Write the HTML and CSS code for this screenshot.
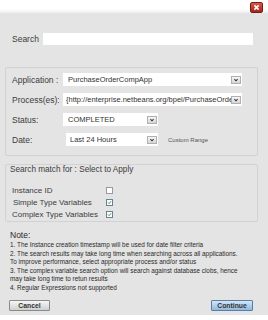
FILE: index.html
```html
<!DOCTYPE html>
<html lang="en">
  <head>
    <meta charset="UTF-8" />
    <meta name="viewport" content="width=device-width, initial-scale=1.0" />
    <title>Search Instances</title>
    <link rel="stylesheet" href="styles.css">
  </head>
  <body>
    <div class="dialog">
      <div class="titlebar">
        <span class="close">
          <svg viewBox="0 0 10 10" width="7" height="7"><path d="M2 2 L8 8 M8 2 L2 8" stroke="#fff" stroke-width="2.2" /></svg>
        </span>
      </div>
      <div class="content">
        <div class="search-row">
          <label>Search</label>
          <div class="text-input"></div>
        </div>

        <div class="panel criteria">
          <div class="row">
            <span class="label">Application :</span>
            <div class="select wide">
              <span class="value">PurchaseOrderCompApp</span>
              <span class="arrow"><svg viewBox="0 0 10 8" width="10" height="8"><path d="M3 3 L5 5 L7 3" fill="none" stroke="#333" stroke-width="1.3" /></svg></span>
            </div>
          </div>
          <div class="row">
            <span class="label">Process(es):</span>
            <div class="select wide process">
              <span class="value">{http://enterprise.netbeans.org/bpel/PurchaseOrderCompApp}</span>
              <span class="arrow"><svg viewBox="0 0 10 8" width="10" height="8"><path d="M3 3 L5 5 L7 3" fill="none" stroke="#333" stroke-width="1.3" /></svg></span>
            </div>
          </div>
          <div class="row">
            <span class="label">Status:</span>
            <div class="select short">
              <span class="value">COMPLETED</span>
              <span class="arrow"><svg viewBox="0 0 10 8" width="10" height="8"><path d="M3 3 L5 5 L7 3" fill="none" stroke="#333" stroke-width="1.3" /></svg></span>
            </div>
          </div>
          <div class="row">
            <span class="label">Date:</span>
            <div class="select short date">
              <span class="value">Last 24 Hours</span>
              <span class="arrow"><svg viewBox="0 0 10 8" width="10" height="8"><path d="M3 3 L5 5 L7 3" fill="none" stroke="#333" stroke-width="1.3" /></svg></span>
            </div>
            <span class="custom">Custom Range</span>
          </div>
        </div>

        <div class="panel match">
          <div class="match-title">Search match for : Select to Apply</div>
          <div class="checks">
            <span>Instance ID</span>
            <span class="check"></span>
            <span class="indent">Simple Type Variables</span>
            <span class="check on"><svg viewBox="0 0 8 8" width="7" height="7"><path d="M1.5 4 L3.3 5.8 L6.5 2" fill="none" stroke="#2a9a2a" stroke-width="1.5" /></svg></span>
            <span>Complex Type Variables</span>
            <span class="check on"><svg viewBox="0 0 8 8" width="7" height="7"><path d="M1.5 4 L3.3 5.8 L6.5 2" fill="none" stroke="#2a9a2a" stroke-width="1.5" /></svg></span>
          </div>
        </div>

        <div class="notes">
          <div class="note-title">Note:</div>
          <div class="note-line">1. The Instance creation timestamp will be used for date filter criteria</div>
          <div class="note-line">2. The search results may take long time when searching across all applications.</div>
          <div class="note-line">To improve performance, select appropriate process and/or status</div>
          <div class="note-line">3. The complex variable search option will search against database clobs, hence</div>
          <div class="note-line">may take long time to retun results</div>
          <div class="note-line">4. Regular Expressions not supported</div>
        </div>

        <div class="buttons">
          <button class="btn">Cancel</button>
          <button class="btn primary">Continue</button>
        </div>
      </div>
    </div>
  </body>
</html>
```

FILE: styles.css
```css
body {
  margin: 0;
  font-family: "Liberation Sans", Arial, sans-serif;
  background-color: #ffffff;
  color: #3c3c3c;
}
.dialog {
  width: 268px;
  height: 320px;
}
.titlebar {
  height: 13px;
  box-sizing: border-box;
  padding-right: 5px;
  display: flex;
  justify-content: flex-end;
  align-items: flex-start;
  background: linear-gradient(#ffffff 0, #ffffff 9px, #ededed 13px);
}
.close {
  margin-top: 2px;
  width: 13px;
  height: 11px;
  box-sizing: border-box;
  border: 1px solid #7d1c14;
  border-radius: 2px;
  background: linear-gradient(#d95a4b, #a3261b);
  display: flex;
  align-items: center;
  justify-content: center;
}
.content {
  height: 302px;
  box-sizing: border-box;
  padding: 20px 10px 0 5px;
  background-color: #e4e4e4;
}
.search-row {
  display: flex;
  align-items: center;
  height: 12px;
  padding-left: 7px;
}
.search-row label {
  width: 31px;
  font-size: 8.5px;
}
.text-input {
  width: 210px;
  height: 12px;
  background-color: #ffffff;
}
.panel {
  border: 1px solid #d2d2d2;
  border-radius: 2px;
}
.criteria {
  margin-top: 22px;
  padding: 5px 0 9px 6px;
  display: flex;
  flex-direction: column;
  gap: 7px;
}
.row {
  display: flex;
  align-items: center;
  height: 13px;
}
.label {
  width: 51px;
  font-size: 8.5px;
}
.select {
  height: 13px;
  box-sizing: border-box;
  padding-left: 5px;
  display: flex;
  align-items: center;
  background-color: #ffffff;
  font-size: 7.5px;
  color: #333;
}
.select.wide {
  width: 179px;
}
.select.process {
  padding-left: 3px;
}
.select.short {
  width: 95px;
}
.select.date {
  width: 92px;
  margin-left: 3px;
  padding-left: 4px;
}
.value {
  flex: 1;
  overflow: hidden;
  white-space: nowrap;
}
.arrow {
  width: 10px;
  height: 8px;
  margin-right: 1px;
  box-sizing: border-box;
  border: 1px solid #b0b0b0;
  background: linear-gradient(#f6f6f6, #d6d6d6);
  display: flex;
  align-items: center;
  justify-content: center;
  overflow: hidden;
}
.custom {
  margin-left: 10px;
  font-size: 6px;
  color: #555;
}
.match {
  margin-top: 8px;
  padding: 0 0 1px 0;
}
.match-title {
  padding-left: 4px;
  height: 10px;
  line-height: 10px;
  font-size: 8.2px;
}
.checks {
  margin-top: 9px;
  padding-left: 6px;
  display: grid;
  grid-template-columns: 94px 8px;
  grid-auto-rows: 12px;
  align-items: center;
  font-size: 8px;
}
.checks .indent {
  padding-left: 1px;
}
.check {
  width: 7px;
  height: 7px;
  box-sizing: border-box;
  border: 1px solid #9a9a9a;
  background-color: #ffffff;
  display: flex;
  align-items: center;
  justify-content: center;
  overflow: hidden;
}
.check.on {
  border-color: #6a7f9a;
}
.notes {
  margin-top: 8px;
  padding-left: 5px;
  color: #2a2a2a;
}
.note-title {
  height: 10px;
  line-height: 10px;
  font-size: 8.5px;
  margin-bottom: 1px;
}
.note-line {
  font-size: 6.4px;
  line-height: 8.5px;
  white-space: nowrap;
}
.buttons {
  margin-top: 8px;
  padding: 0 5px 0 4px;
  display: flex;
  justify-content: space-between;
}
.btn {
  width: 41px;
  height: 11px;
  padding: 0;
  box-sizing: border-box;
  border: 1px solid #8a8a8a;
  border-radius: 1px;
  background: linear-gradient(#f6f6f6, #cfcfcf);
  font-family: "Liberation Sans", Arial, sans-serif;
  font-size: 6.8px;
  font-weight: bold;
  color: #333;
}
.btn.primary {
  width: 42px;
  border-color: #5b7ea6;
  background: linear-gradient(#d3e6f6, #8fb9df);
}
```
